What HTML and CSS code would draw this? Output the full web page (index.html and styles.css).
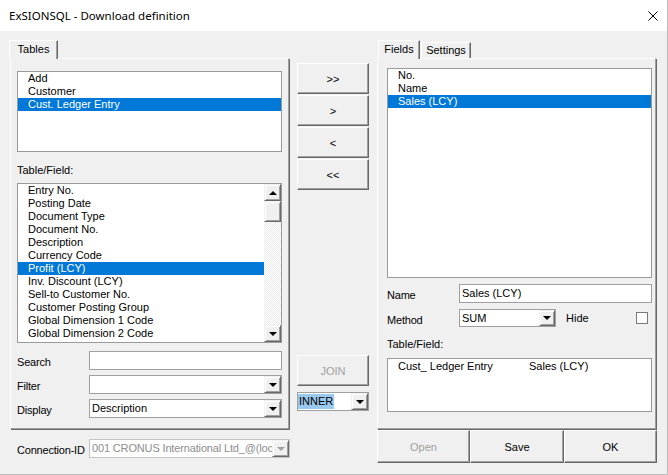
FILE: index.html
```html
<!DOCTYPE html>
<html lang="en">
<head>
    <meta charset="UTF-8">
    <title>ExSIONSQL - Download definition</title>
    <link rel="stylesheet" href="styles.css">
</head>
<body>
    <div class="window">
        <div class="titlebar">
            <span class="title">ExSIONSQL - Download definition</span>
            <svg class="close" width="10" height="10" viewBox="0 0 10 10">
                <path d="M0.5 0.5 L9.5 9.5 M9.5 0.5 L0.5 9.5" stroke="#000" stroke-width="1" fill="none"/>
            </svg>
        </div>

        <div class="client">
            <!-- Tables side -->
            <div class="left-col">
                <div class="tabs">
                    <div class="tab active tab-tables">Tables</div>
                </div>
                <div class="panel left-panel">
                    <div class="listbox tables-list">
                        <div class="item">Add</div>
                        <div class="item">Customer</div>
                        <div class="item sel">Cust. Ledger Entry</div>
                    </div>

                    <div class="caption">Table/Field:</div>

                    <div class="listbox field-list">
                        <div class="items">
                            <div class="item">Entry No.</div>
                            <div class="item">Posting Date</div>
                            <div class="item">Document Type</div>
                            <div class="item">Document No.</div>
                            <div class="item">Description</div>
                            <div class="item">Currency Code</div>
                            <div class="item sel">Profit (LCY)</div>
                            <div class="item">Inv. Discount (LCY)</div>
                            <div class="item">Sell-to Customer No.</div>
                            <div class="item">Customer Posting Group</div>
                            <div class="item">Global Dimension 1 Code</div>
                            <div class="item">Global Dimension 2 Code</div>
                        </div>
                        <div class="scrollbar">
                            <div class="sb-btn"><span class="arrow-up"></span></div>
                            <div class="sb-thumb"></div>
                            <div class="sb-track"></div>
                            <div class="sb-btn"><span class="arrow-down"></span></div>
                        </div>
                    </div>

                    <div class="form-rows">
                        <div class="form-row">
                            <label>Search</label>
                            <div class="input"></div>
                        </div>
                        <div class="form-row">
                            <label>Filter</label>
                            <div class="combo">
                                <span class="combo-text"></span>
                                <span class="combo-btn"><span class="arrow-down"></span></span>
                            </div>
                        </div>
                        <div class="form-row">
                            <label>Display</label>
                            <div class="combo">
                                <span class="combo-text">Description</span>
                                <span class="combo-btn"><span class="arrow-down"></span></span>
                            </div>
                        </div>
                    </div>
                </div>

                <div class="form-row conn-row">
                    <label>Connection-ID</label>
                    <div class="combo disabled">
                        <span class="combo-text">001 CRONUS International Ltd_@(loc</span>
                        <span class="combo-btn"><span class="arrow-down"></span></span>
                    </div>
                </div>
            </div>

            <!-- move buttons -->
            <div class="mid-col">
                <div class="btn move-btn">&gt;&gt;</div>
                <div class="btn move-btn">&gt;</div>
                <div class="btn move-btn">&lt;</div>
                <div class="btn move-btn">&lt;&lt;</div>

                <div class="btn move-btn join-btn disabled">JOIN</div>
                <div class="combo join-type">
                    <span class="combo-text"><span class="hl">INNER</span></span>
                    <span class="combo-btn"><span class="arrow-down"></span></span>
                </div>
            </div>

            <!-- Fields side -->
            <div class="right-col">
                <div class="tabs">
                    <div class="tab active tab-fields">Fields</div>
                    <div class="tab tab-settings">Settings</div>
                </div>
                <div class="panel right-panel">
                    <div class="listbox selected-list">
                        <div class="item">No.</div>
                        <div class="item">Name</div>
                        <div class="item sel">Sales (LCY)</div>
                    </div>

                    <div class="form-row name-row">
                        <label>Name</label>
                        <div class="input"><span class="combo-text">Sales (LCY)</span></div>
                    </div>
                    <div class="form-row method-row">
                        <label>Method</label>
                        <div class="combo method-combo">
                            <span class="combo-text">SUM</span>
                            <span class="combo-btn"><span class="arrow-down"></span></span>
                        </div>
                        <span class="hide-label">Hide</span>
                        <span class="checkbox"></span>
                    </div>

                    <div class="caption right-caption">Table/Field:</div>

                    <div class="listbox join-list">
                        <div class="join-item">
                            <span>Cust_ Ledger Entry</span>
                            <span>Sales (LCY)</span>
                        </div>
                    </div>
                </div>

                <div class="btn-row">
                    <div class="btn disabled">Open</div>
                    <div class="btn btn-save">Save</div>
                    <div class="btn">OK</div>
                </div>
            </div>
        </div>
    </div>
</body>
</html>
```

FILE: styles.css
```css
* {
    box-sizing: border-box;
}

body {
    margin: 0;
    background: #f0f0f0;
    font-family: "Liberation Sans", Arial, sans-serif;
    font-size: 11px;
    color: #000;
}

.window {
    width: 668px;
    height: 475px;
    background: #f0f0f0;
    border-right: 1px solid #bdbdbd;
    border-bottom: 1px solid #bdbdbd;
    overflow: hidden;
}

/* title bar */
.titlebar {
    height: 31px;
    background: #fff;
    display: flex;
    align-items: center;
    justify-content: space-between;
    padding: 0 9px 0 9px;
}

.title {
    font-family: "Noto Sans", sans-serif;
    font-size: 11.5px;
}

.close {
    display: block;
}

/* three columns */
.client {
    display: flex;
    padding: 8px 0 0 10px;
}

.left-col {
    width: 280px;
}

.mid-col {
    width: 72px;
    margin: 0 8px 0 7px;
    padding-top: 24px;
    display: flex;
    flex-direction: column;
}

.right-col {
    width: 280px;
}

/* tabs */
.tabs {
    display: flex;
    align-items: flex-end;
    height: 19px;
}

.tab {
    height: 16px;
    line-height: 14px;
    text-align: center;
    border: 1px solid;
    border-color: #fff #696969 transparent #fff;
    border-bottom: none;
    box-shadow: inset -1px 0 0 #a0a0a0;
    background: #f0f0f0;
}

.tab.active {
    height: 19px;
    line-height: 16px;
    margin-bottom: -1px;
    position: relative;
    z-index: 1;
}

.tab-tables {
    width: 49px;
    margin-left: -1px;
}

.tab-fields {
    width: 42px;
    margin-left: 1px;
}

.tab-settings {
    width: 50px;
    margin-left: 1px;
}

/* tab page */
.panel {
    width: 279px;
    height: 371px;
    border: 1px solid;
    border-color: #fff #a0a0a0 #a0a0a0 #fff;
    box-shadow: 1px 1px 0 #696969;
}

.left-panel {
    padding: 12px 6px 0 6px;
}

.right-panel {
    padding: 9px 3px 0 9px;
}

/* list boxes */
.listbox {
    background: #fff;
    border: 1px solid #9a9a9a;
    width: 265px;
}

.item {
    height: 13px;
    line-height: 13px;
    padding-left: 10px;
    white-space: nowrap;
}

.item.sel {
    background: #0078d7;
    color: #fff;
}

.tables-list {
    height: 81px;
}

.caption {
    height: 13px;
    line-height: 13px;
    margin-top: 12px;
    margin-bottom: 6px;
}

.field-list {
    height: 160px;
    display: flex;
}

.field-list .items {
    flex: 1;
    overflow: hidden;
}

/* classic scroll bar */
.scrollbar {
    width: 17px;
    display: flex;
    flex-direction: column;
}

.sb-btn,
.sb-thumb,
.combo-btn {
    background: #f0f0f0;
    border: 1px solid;
    border-color: #f0f0f0 #696969 #696969 #f0f0f0;
    box-shadow: inset 1px 1px 0 #fff, inset -1px -1px 0 #a0a0a0;
    display: flex;
    align-items: center;
    justify-content: center;
}

.sb-btn {
    height: 17px;
}

.sb-thumb {
    height: 21px;
}

.sb-track {
    flex: 1;
    background: repeating-conic-gradient(#fff 0 25%, #ebebeb 0 50%) 0 0 / 2px 2px;
}

.arrow-up,
.arrow-down {
    width: 0;
    height: 0;
    border-left: 4px solid transparent;
    border-right: 4px solid transparent;
}

.arrow-up {
    border-bottom: 4px solid #000;
}

.arrow-down {
    border-top: 4px solid #000;
}

/* form rows */
.form-rows {
    margin-top: 8px;
    display: flex;
    flex-direction: column;
    gap: 5px;
}

.form-row {
    display: flex;
    height: 19px;
}

.form-row label {
    width: 72px;
    flex: none;
    padding-top: 5px;
    line-height: 13px;
    white-space: nowrap;
    letter-spacing: -0.2px;
}

.input,
.combo {
    flex: 1;
    display: flex;
    background: #fff;
    border: 1px solid #a0a0a0;
    min-width: 0;
}

.combo-text {
    flex: 1;
    padding-left: 2px;
    line-height: 17px;
    white-space: nowrap;
    overflow: hidden;
}

.combo-btn {
    width: 17px;
    flex: none;
}

.conn-row {
    margin-top: 10px;
    padding-left: 7px;
}

.combo.disabled {
    border-color: #c4c4c4;
    color: #8d8d8d;
}

.combo.disabled .combo-text {
    letter-spacing: -0.15px;
}

.combo.disabled .arrow-down {
    border-top-color: #a0a0a0;
}

/* buttons */
.btn {
    background: #f0f0f0;
    border: 1px solid;
    border-color: #fff #696969 #696969 #fff;
    box-shadow: inset -1px -1px 0 #a0a0a0;
    display: flex;
    align-items: center;
    justify-content: center;
}

.btn.disabled {
    color: #a0a0a0;
}

.move-btn {
    height: 31px;
    margin-bottom: 1px;
}

.join-btn {
    margin-top: 164px;
}

.join-type {
    flex: none;
    height: 19px;
    margin-top: 5px;
}

.join-type .combo-text {
    padding-left: 0;
}

.hl {
    background: #99c9ef;
    display: inline-block;
    line-height: 15px;
    margin-top: 1px;
    padding: 0 1px;
}

/* fields tab */
.selected-list {
    height: 210px;
}

.name-row {
    margin-top: 6px;
}

.method-row {
    margin-top: 6px;
    height: 18px;
    align-items: flex-start;
}

.method-combo {
    flex: none;
    width: 97px;
    height: 18px;
}

.method-combo .combo-text {
    line-height: 16px;
}

.method-combo .combo-btn {
    width: 16px;
}

.hide-label {
    margin-left: 10px;
    line-height: 13px;
    padding-top: 3px;
}

.checkbox {
    width: 12px;
    height: 12px;
    margin: 3px 4px 0 auto;
    background: #fff;
    border: 1px solid #7a7a7a;
}

.right-caption {
    margin-top: 11px;
    margin-bottom: 7px;
}

.join-list {
    height: 54px;
}

.join-item {
    display: grid;
    grid-template-columns: 131px auto;
    padding-left: 10px;
    height: 13px;
    line-height: 13px;
    margin-top: 1px;
}

.btn-row {
    display: flex;
    margin-top: 1px;
}

.btn-row .btn {
    width: 93px;
    height: 33px;
}

.btn-row .btn-save {
    width: 94px;
}
```
